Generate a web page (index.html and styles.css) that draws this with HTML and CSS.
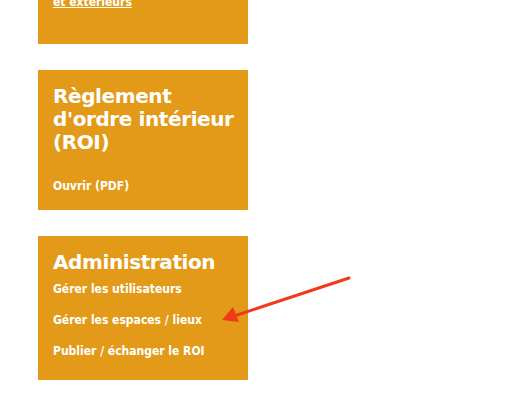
FILE: index.html
```html
<!DOCTYPE html>
<html lang="fr">
<head>
<meta charset="utf-8">
<link rel="stylesheet" href="styles.css">
</head>
<body>
<div class="page">
  <div class="cards">
    <section class="card card-top">
      <a class="link underline" href="#">et extérieurs</a>
    </section>
    <section class="card card-roi">
      <h2 class="card-title">Règlement<br>d'ordre intérieur (ROI)</h2>
      <a class="link" href="#">Ouvrir (PDF)</a>
    </section>
    <section class="card card-admin">
      <h2 class="card-title">Administration</h2>
      <ul class="link-list">
        <li><a class="link" href="#">Gérer les utilisateurs</a></li>
        <li><a class="link" href="#">Gérer les espaces / lieux</a></li>
        <li><a class="link" href="#">Publier / échanger le ROI</a></li>
      </ul>
    </section>
  </div>
  <svg class="arrow" width="140" height="52" viewBox="0 0 140 52">
    <line x1="130" y1="6" x2="18" y2="43" stroke="#f03a1a" stroke-width="3" stroke-linecap="round"/>
    <polygon points="3,48 14,35 20,50" fill="#f03a1a"/>
  </svg>
</div>
</body>
</html>
```
FILE: styles.css
```css
html, body {
  margin: 0;
  padding: 0;
  background: #ffffff;
}
body {
  font-family: "DejaVu Sans", Verdana, sans-serif;
  color: #ffffff;
}
.page {
  position: relative;
  width: 531px;
  height: 412px;
  overflow: hidden;
}
.cards {
  display: flex;
  flex-direction: column;
  gap: 26px;
  margin-left: 38px;
  margin-top: -20px;
  width: 210px;
}
.card {
  background: #e39a19;
  padding: 0 12px 0 15px;
  box-sizing: border-box;
}
.card-top {
  height: 64px;
  padding-top: 11px;
}
.link {
  color: #ffffff;
  text-decoration: none;
  font-family: "DejaVu Sans Condensed", "DejaVu Sans", sans-serif;
  font-stretch: condensed;
  font-size: 12px;
  font-weight: bold;
}
.underline {
  text-decoration: underline;
}
.card-roi {
  height: 140px;
  padding-top: 15px;
}
.card-title {
  margin: 0;
  font-size: 20px;
  line-height: 23px;
  font-weight: bold;
  letter-spacing: -0.4px;
}
.card-roi .card-title {
  margin-bottom: 21px;
}
.card-admin {
  height: 144px;
  padding-top: 15px;
}
.link-list {
  list-style: none;
  margin: 7px 0 0;
  padding: 0;
  display: flex;
  flex-direction: column;
  gap: 15px;
  font-size: 12px;
}
.link-list li {
  line-height: 16px;
}
.arrow {
  position: absolute;
  left: 219px;
  top: 272px;
}
```
